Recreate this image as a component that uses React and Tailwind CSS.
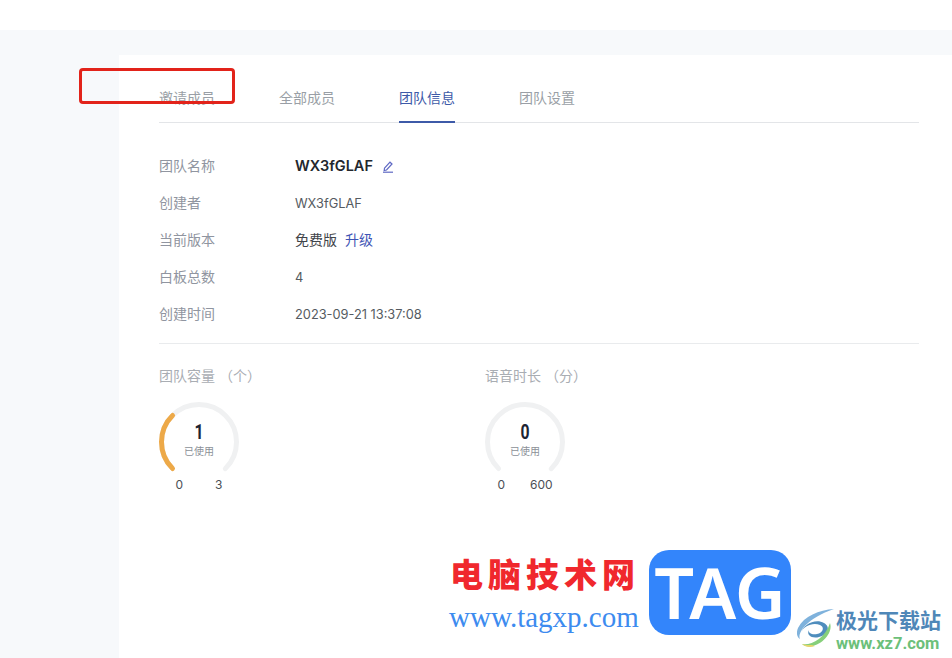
import React from "react";

const font = "font-['Inter','Noto_Sans_CJK_SC',sans-serif]";

const tabs = [
  { label: "邀请成员" },
  { label: "全部成员" },
  { label: "团队信息", active: true },
  { label: "团队设置" },
];

// 270 degree gauge, track plus used part
function Gauge({ used, min, max, percent, gap }) {
  const r = 37.5;
  const len = 2 * Math.PI * r * 0.75;
  return (
    <div className="w-[80px] mt-[16px]">
      <div className="relative w-[80px] h-[80px]">
        <svg width="80" height="80" viewBox="0 0 80 80" className="rotate-[135deg]">
          <circle cx="40" cy="40" r={r} fill="none" stroke="#f0f1f2" strokeWidth="5" strokeLinecap="round" strokeDasharray={`${len} 999`} />
          {percent > 0 && (
            <circle cx="40" cy="40" r={r} fill="none" stroke="#eda948" strokeWidth="5" strokeLinecap="round" strokeDasharray={`${len * percent} 999`} />
          )}
        </svg>
        <div className="absolute inset-0 flex flex-col items-center pt-[17px]">
          <span className="text-[21px] leading-[26px] font-bold text-[#1c2433] scale-x-[0.75] font-['Roboto',sans-serif]">{used}</span>
          <span className="text-[10px] leading-[14px] text-[#8b9097] mt-[-1px]">已使用</span>
        </div>
      </div>
      <div className={`flex justify-center text-[12px] leading-[16px] text-[#4b4f55] mt-[-5px] whitespace-nowrap ${gap}`}>
        <span>{min}</span>
        <span>{max}</span>
      </div>
    </div>
  );
}

function Row({ label, children }) {
  return (
    <div className="flex items-center h-[37px] text-[12.8px]">
      <div className="w-[136px] text-[14px] text-[#9095a0] mb-[2px]">{label}</div>
      <div className="flex items-center text-[#555b61]">{children}</div>
    </div>
  );
}

export default function App() {
  return (
    <div className={`relative w-[952px] h-[658px] overflow-hidden bg-white ${font}`}>
      <div className="mt-[30px] h-[628px] bg-[#f7f9fb] pt-[25px] pl-[119px]">
        <div className="h-full bg-white pl-[40px] pr-[33px]">
          {/* tabs */}
          <div className="flex gap-[64px] h-[68px] items-end border-b border-[#e3e5e8]">
            {tabs.map((t) => (
              <div
                key={t.label}
                className={`h-[35px] w-[56px] whitespace-nowrap text-[14px] leading-[20px] mb-[-1px] ${
                  t.active ? "text-[#3d5aa8] border-b-2 border-[#3d5aa8]" : "text-[#9a9fa6]"
                }`}
              >
                {t.label}
              </div>
            ))}
          </div>

          {/* info rows */}
          <div className="pt-[25px] pb-[10px] border-b border-[#e9ebed]">
            <Row label="团队名称">
              <span className="text-[14.5px] font-semibold text-[#23272e] mb-[1px]">WX3fGLAF</span>
              <svg width="12" height="13" viewBox="0 0 12 13" fill="none" stroke="#5f69c4" strokeWidth="1.2" className="ml-[9px]">
                <path d="M2.5 8.2 8 2.2l2 1.8-5.5 6-2.3.4z" />
                <path d="M1 12.2h10" />
              </svg>
            </Row>
            <Row label="创建者">WX3fGLAF</Row>
            <Row label="当前版本">
              <span className="text-[14px] text-[#3f444a] mb-[2px]">免费版</span>
              <span className="ml-[8px] text-[14px] text-[#3f55b5] mb-[2px]">升级</span>
            </Row>
            <Row label="白板总数">4</Row>
            <Row label="创建时间">2023-09-21 13:37:08</Row>
          </div>

          {/* usage */}
          <div className="flex pt-[22px]">
            <div className="w-[326px]">
              <div className="text-[14px] leading-[20px] text-[#a9adb3] whitespace-nowrap">团队容量 （个）</div>
              <Gauge used="1" min="0" max="3" percent={1 / 3} gap="gap-[32px]" />
            </div>
            <div>
              <div className="text-[14px] leading-[20px] text-[#a9adb3] whitespace-nowrap">语音时长 （分）</div>
              <Gauge used="0" min="0" max="600" percent={0} gap="gap-[25px]" />
            </div>
          </div>
        </div>
      </div>

      {/* red annotation box */}
      <div className="absolute left-[79px] top-[68px] w-[156px] h-[36px] rounded-[4px] border-[3px] border-[#e2231a]" />

      {/* watermark tagxp */}
      <div className="absolute left-[450px] top-[550px] text-[33px] leading-[46px] tracking-[5px] font-black text-[#f0282d] whitespace-nowrap font-['Noto_Sans_CJK_SC',sans-serif]">
        电脑技术网
      </div>
      <div className="absolute left-[449px] top-[603px] text-[29px] leading-[28px] text-[#3d8bef] whitespace-nowrap font-['Liberation_Serif',serif]">
        www.tagxp.com
      </div>
      <div className="absolute left-[649px] top-[550px] w-[142px] h-[85px] rounded-[20px] bg-[#3385fb] flex items-center justify-center text-white text-[70px] leading-[85px] font-['Noto_Sans',sans-serif] font-semibold">
        TAG
      </div>

      {/* watermark xz7 */}
      <svg width="44" height="44" viewBox="0 0 44 44" className="absolute left-[794px] top-[606px]">
        <path d="M40 3C25 4 10 10 4 22c-2 5-1 9 2 11C3 26 14 12 40 3z" fill="#7fb2dc" />
        <path d="M7 27c2-7 12-11 19-8 5 2 3 8-3 9-5 1-9-1-8-4-3 5 3 9 10 7 9-2 12-10 5-14-9-5-21 2-23 10z" fill="#4f8dbd" />
        <path d="M36 17c3 9-6 20-17 23-5 1-9 0-11-2 8 2 23-5 28-21z" fill="#86cf7a" />
        <path d="M8 38c3 3 8 4 13 2l-3-1c-4 0-7 0-10-1z" fill="#e6d56a" />
      </svg>
      <div className="absolute left-[836px] top-[604px] text-[21px] leading-[30px] font-bold text-[#4f87b8] whitespace-nowrap font-['Noto_Sans_CJK_SC',sans-serif]">
        极光下载站
      </div>
      <div className="absolute left-[836px] top-[634px] text-[16.5px] leading-[20px] font-bold text-[#6cc07a] whitespace-nowrap font-['Roboto',sans-serif]">
        www.xz7.com
      </div>
    </div>
  );
}
